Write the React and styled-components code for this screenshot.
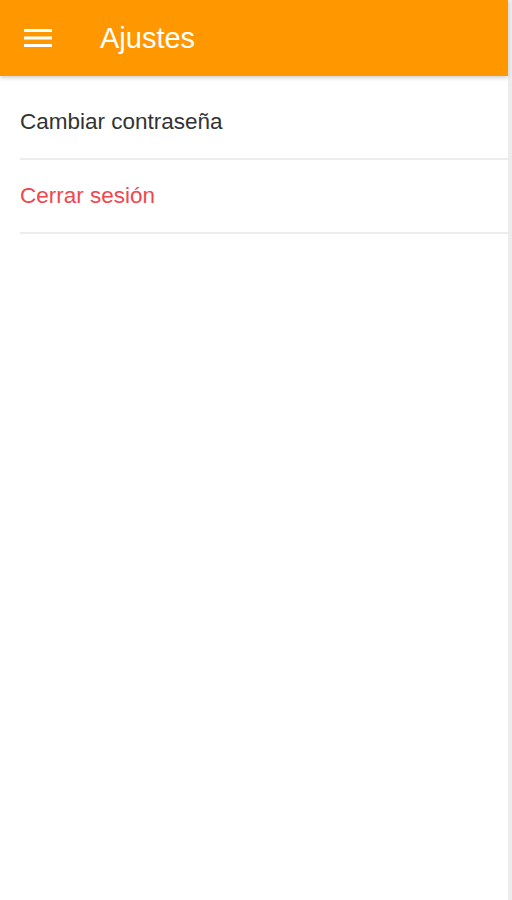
import styled, { createGlobalStyle } from "styled-components";

const GlobalStyle = createGlobalStyle`
  html, body {
    margin: 0;
    padding: 0;
    background: #ffffff;
    font-family: "Liberation Sans", Arial, sans-serif;
  }
`;

const Screen = styled.div`
  display: flex;
  height: 900px;
  overflow: hidden;
`;

const Page = styled.div`
  flex: 1;
  display: flex;
  flex-direction: column;
  background: #ffffff;
`;

const Scrollbar = styled.div`
  width: 4px;
  background: #ececec;
`;

const Toolbar = styled.header`
  height: 76px;
  display: flex;
  align-items: center;
  background: #ff9800;
  color: #ffffff;
  box-shadow: 0 2px 4px rgba(0, 0, 0, 0.18);
  position: relative;
  z-index: 1;
`;

const MenuButton = styled.button`
  width: 76px;
  height: 76px;
  display: flex;
  align-items: center;
  justify-content: center;
  padding: 0;
  border: none;
  background: transparent;
  color: #ffffff;
  cursor: pointer;
`;

const Title = styled.h1`
  margin: 0 0 0 24px;
  font-size: 29px;
  font-weight: 400;
  letter-spacing: 0;
`;

const List = styled.ul`
  list-style: none;
  margin: 10px 0 0 20px;
  padding: 0;
`;

const Item = styled.li`
  height: 72px;
  display: flex;
  align-items: center;
  border-bottom: 2px solid #ececec;
  font-size: 22.5px;
  color: ${(p) => (p.$danger ? "#f0474f" : "#333333")};
  cursor: pointer;
`;

export default function App() {
  return (
    <Screen>
      <GlobalStyle />
      <Page>
        <Toolbar>
          <MenuButton aria-label="Menú">
            <svg width="28" height="20" viewBox="0 0 28 20" fill="#fff">
              <rect x="0" y="1" width="28" height="3" />
              <rect x="0" y="8.5" width="28" height="3" />
              <rect x="0" y="16" width="28" height="3" />
            </svg>
          </MenuButton>
          <Title>Ajustes</Title>
        </Toolbar>
        <List>
          <Item>Cambiar contraseña</Item>
          <Item $danger>Cerrar sesión</Item>
        </List>
      </Page>
      <Scrollbar />
    </Screen>
  );
}
